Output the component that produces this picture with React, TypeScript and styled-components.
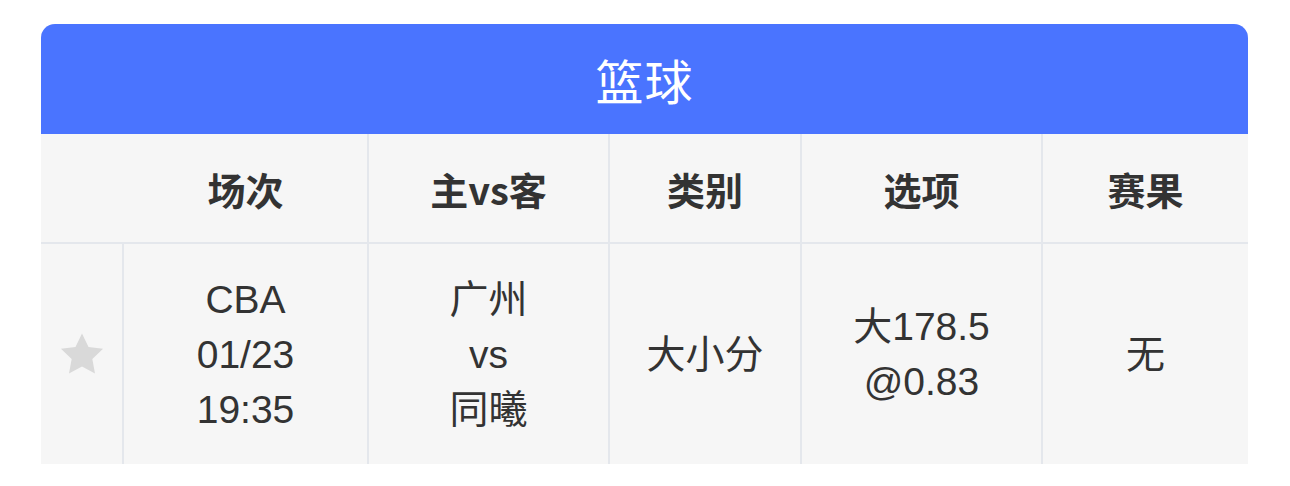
import React from "react";
import styled, { createGlobalStyle } from "styled-components";

const GlobalStyle = createGlobalStyle`
  html, body { margin: 0; padding: 0; background: #ffffff; }
  body { font-family: "Liberation Sans", "Noto Sans CJK SC", sans-serif; }
`;

const Page = styled.div`
  padding: 24px 42px 0 41px;
`;

const Card = styled.div`
  width: 1207px;
  border-radius: 14px 14px 0 0;
  overflow: hidden;
  background: #f6f6f6;
`;

const Title = styled.div`
  height: 110px;
  background: #4a74ff;
  color: #ffffff;
  display: flex;
  align-items: center;
  justify-content: center;
  font-family: "Noto Sans CJK SC", sans-serif;
  font-size: 48px;
  font-weight: 400;
  letter-spacing: 1px;
`;

const Grid = styled.div`
  display: grid;
  grid-template-columns: 83px 245px 241px 192px 241px 205px;
  grid-template-rows: 110px 220px;
`;

const HeadCell = styled.div<{ $noLine?: boolean; $last?: boolean }>`
  display: flex;
  align-items: center;
  justify-content: center;
  border-bottom: 2px solid #e4e7ec;
  border-right: ${(p) => (p.$noLine || p.$last ? "none" : "2px solid #e4e7ec")};
  color: #333333;
  font-family: "Noto Sans CJK SC", sans-serif;
  font-size: 38px;
  font-weight: 700;
`;

const BodyCell = styled.div<{ $last?: boolean }>`
  display: flex;
  flex-direction: column;
  align-items: center;
  justify-content: center;
  border-right: ${(p) => (p.$last ? "none" : "2px solid #e4e7ec")};
  color: #333333;
  font-size: 39px;
  line-height: 55px;
  text-align: center;
`;

const Line = styled.span`
  display: block;
`;

const Star = () => (
  <svg width="46" height="44" viewBox="0 0 24 23">
    <path
      d="M12 0.8l3.4 7 7.6 1-5.6 5.3 1.4 7.6L12 18l-6.8 3.7 1.4-7.6L1 8.8l7.6-1z"
      fill="#d9d9d9"
    />
  </svg>
);

export default function App() {
  return (
    <Page>
      <GlobalStyle />
      <Card>
        <Title>篮球</Title>
        <Grid>
          <HeadCell $noLine />
          <HeadCell>场次</HeadCell>
          <HeadCell>主vs客</HeadCell>
          <HeadCell>类别</HeadCell>
          <HeadCell>选项</HeadCell>
          <HeadCell $last>赛果</HeadCell>

          <BodyCell>
            <Star />
          </BodyCell>
          <BodyCell>
            <Line>CBA</Line>
            <Line>01/23</Line>
            <Line>19:35</Line>
          </BodyCell>
          <BodyCell>
            <Line>广州</Line>
            <Line>vs</Line>
            <Line>同曦</Line>
          </BodyCell>
          <BodyCell>
            <Line>大小分</Line>
          </BodyCell>
          <BodyCell>
            <Line>大178.5</Line>
            <Line>@0.83</Line>
          </BodyCell>
          <BodyCell $last>
            <Line>无</Line>
          </BodyCell>
        </Grid>
      </Card>
    </Page>
  );
}
